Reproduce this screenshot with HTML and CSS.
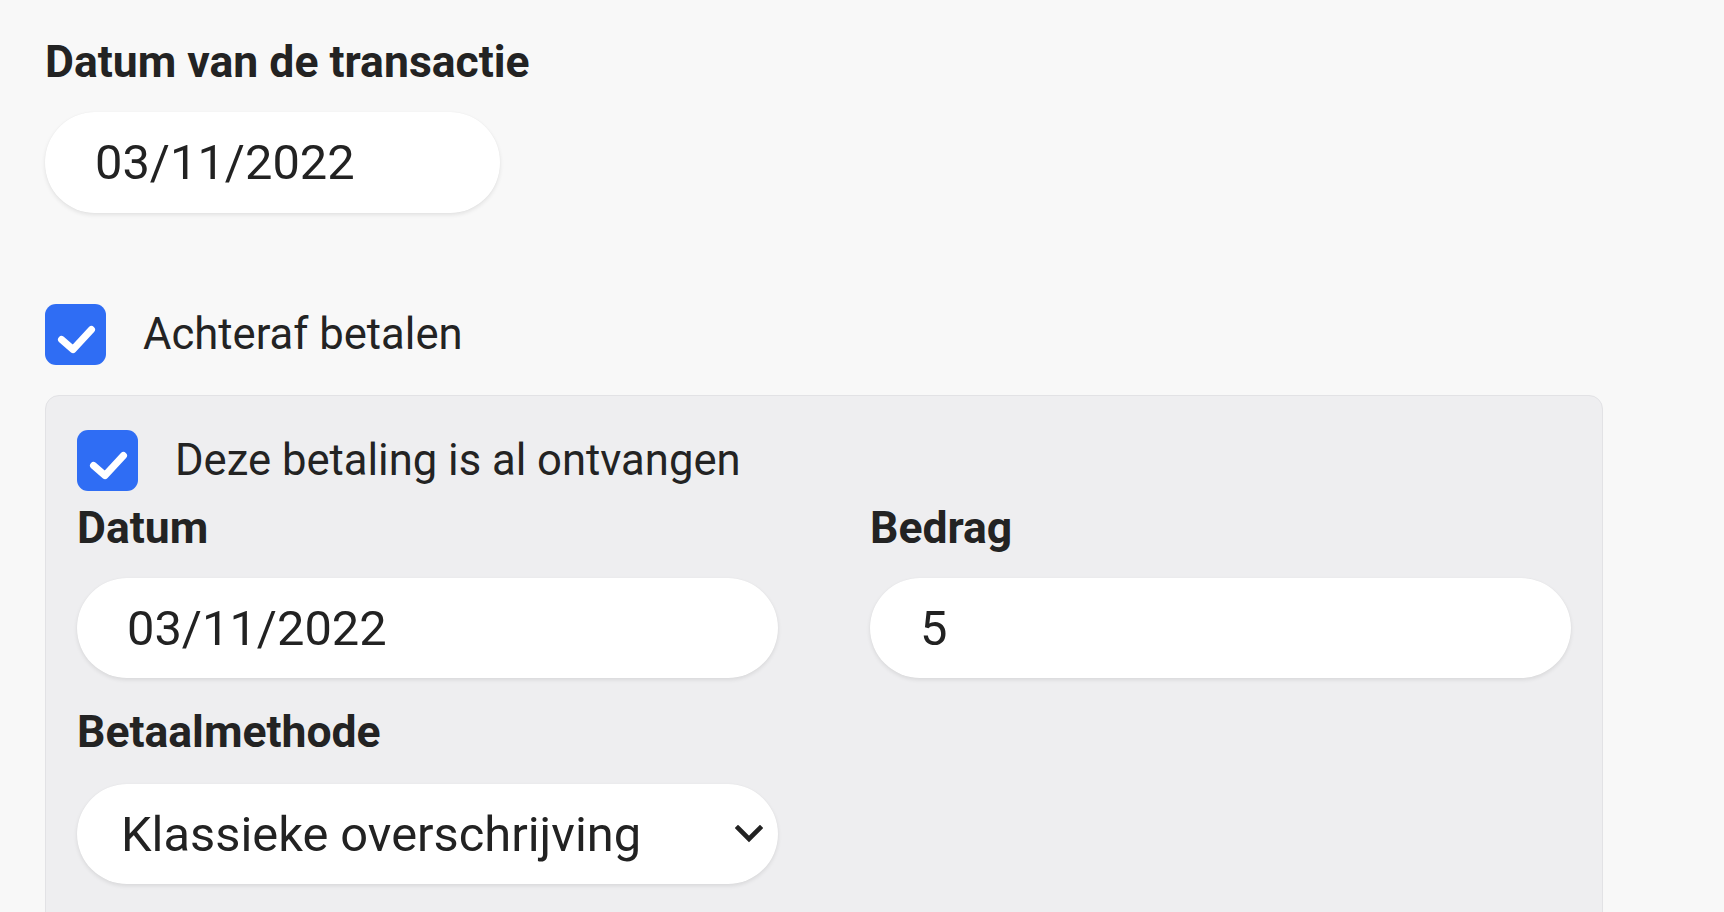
FILE: index.html
```html
<!DOCTYPE html>
<html lang="nl">
<head>
<meta charset="utf-8">
<title>Transactie</title>
<link rel="stylesheet" href="styles.css">
</head>
<body>
<main class="page">
  <label class="label" for="tx-date">Datum van de transactie</label>
  <input id="tx-date" class="pill pill-short" type="text" value="03/11/2022">

  <div class="check-row check-row-top">
    <span class="checkbox">
      <svg viewBox="0 0 61 61" width="61" height="61"><path d="M16.5 35.5 L28 45.5 L46.5 25.5" fill="none" stroke="#fff" stroke-width="7" stroke-linecap="round" stroke-linejoin="round"/></svg>
    </span>
    <span class="check-text">Achteraf betalen</span>
  </div>

  <section class="panel">
    <div class="check-row">
      <span class="checkbox">
        <svg viewBox="0 0 61 61" width="61" height="61"><path d="M16.5 35.5 L28 45.5 L46.5 25.5" fill="none" stroke="#fff" stroke-width="7" stroke-linecap="round" stroke-linejoin="round"/></svg>
      </span>
      <span class="check-text">Deze betaling is al ontvangen</span>
    </div>

    <div class="grid">
      <div class="field">
        <label class="label" for="pay-date">Datum</label>
        <input id="pay-date" class="pill" type="text" value="03/11/2022">
      </div>
      <div class="field">
        <label class="label" for="pay-amount">Bedrag</label>
        <input id="pay-amount" class="pill" type="text" value="5">
      </div>
      <div class="field field-method">
        <label class="label" for="pay-method">Betaalmethode</label>
        <div class="pill select-pill">
          <select id="pay-method" class="select">
            <option>Klassieke overschrijving</option>
          </select>
          <svg class="chevron" viewBox="0 0 28 18" width="28" height="18"><path d="M3 3 L14 14 L25 3" fill="none" stroke="#222" stroke-width="4.6" stroke-linecap="square" stroke-linejoin="miter"/></svg>
        </div>
      </div>
    </div>
  </section>
</main>
</body>
</html>
```

FILE: styles.css
```css
* {
  box-sizing: border-box;
}

html,
body {
  margin: 0;
  background: #f8f8f8;
}

body {
  font-family: Roboto, "Liberation Sans", sans-serif;
  color: #222;
}

.page {
  padding: 37px 0 0 45px;
  width: 1603px;
  display: flex;
  flex-direction: column;
  align-items: flex-start;
}

.label {
  display: block;
  font-size: 44.5px;
  line-height: 50px;
  font-weight: 700;
  color: #232323;
}

.pill {
  display: block;
  margin: 25px 0 0;
  height: 100px;
  width: 100%;
  border: none;
  outline: none;
  border-radius: 50px;
  background: #fff;
  box-shadow: 0 2px 4px rgba(0, 0, 0, 0.09), 0 0 1px rgba(0, 0, 0, 0.06);
  padding: 0 0 0 50px;
  font-family: Roboto, "Liberation Sans", sans-serif;
  font-size: 48.8px;
  color: #222;
}

.pill-short {
  width: 455px;
  height: 101px;
}

.check-row {
  display: flex;
  align-items: center;
  gap: 37px;
  height: 61px;
}

.check-row-top {
  margin-top: 91px;
}

.checkbox {
  width: 61px;
  height: 61px;
  border-radius: 11px;
  background: #2f6df4;
  display: flex;
  flex-shrink: 0;
}

.check-text {
  font-size: 43.6px;
  line-height: 50px;
  color: #232323;
}

.panel {
  margin-top: 30px;
  align-self: stretch;
  background: #eeeef0;
  border: 1px solid #e2e2e5;
  border-radius: 14px;
  padding: 34px 31px 60px;
}

.grid {
  display: grid;
  grid-template-columns: 1fr 1fr;
  column-gap: 92px;
  margin-top: 12px;
}

.field-method {
  margin-top: 29px;
}

.field-method .pill {
  margin-top: 27px;
}

.select-pill {
  display: flex;
  align-items: center;
  padding: 0 15px 0 44px;
}

.select {
  flex: 1;
  appearance: none;
  -webkit-appearance: none;
  border: none;
  outline: none;
  background: transparent;
  font-family: Roboto, "Liberation Sans", sans-serif;
  font-size: 48.8px;
  color: #222;
  padding: 0;
  height: 100%;
}

.chevron {
  flex-shrink: 0;
}
```
